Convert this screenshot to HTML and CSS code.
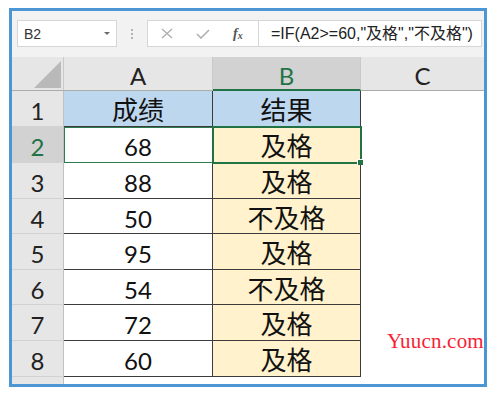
FILE: index.html
```html
<!DOCTYPE html>
<html lang="zh">
<head>
    <meta charset="UTF-8">
    <title>成绩</title>
    <link rel="stylesheet" href="styles.css">
</head>
<body>
    <div class="frame">
        <div class="toolbar">
            <div class="name-box">
                <span>B2</span>
                <span class="caret"></span>
            </div>
            <div class="grip"><i></i><i></i><i></i></div>
            <div class="fx-buttons">
                <svg width="12" height="11" viewBox="0 0 12 11"><path d="M1 1 L11 10 M11 1 L1 10" stroke="#b0b0b0" stroke-width="1.4" fill="none"/></svg>
                <svg width="14" height="10" viewBox="0 0 14 10"><path d="M1 5 L5 9 L13 1" stroke="#b0b0b0" stroke-width="1.6" fill="none"/></svg>
                <span class="fx">f<sub>x</sub></span>
            </div>
            <div class="formula">=IF(A2&gt;=60,"及格","不及格")</div>
        </div>

        <div class="sheet">
            <div class="corner"><span class="tri"></span></div>
            <div class="col-head">A</div>
            <div class="col-head sel">B</div>
            <div class="col-head last">C</div>

            <div class="row-head">1</div>
            <div class="cell head cjk">成绩</div>
            <div class="cell head cjk">结果</div>
            <div class="blank"></div>

            <div class="row-head sel">2</div>
            <div class="cell num ref">68</div>
            <div class="cell res cjk active">及格</div>
            <div class="blank"></div>

            <div class="row-head">3</div>
            <div class="cell num">88</div>
            <div class="cell res cjk">及格</div>
            <div class="blank"></div>

            <div class="row-head">4</div>
            <div class="cell num">50</div>
            <div class="cell res cjk">不及格</div>
            <div class="blank"></div>

            <div class="row-head">5</div>
            <div class="cell num">95</div>
            <div class="cell res cjk">及格</div>
            <div class="blank"></div>

            <div class="row-head">6</div>
            <div class="cell num">54</div>
            <div class="cell res cjk">不及格</div>
            <div class="blank"></div>

            <div class="row-head">7</div>
            <div class="cell num">72</div>
            <div class="cell res cjk">及格</div>
            <div class="blank"></div>

            <div class="row-head">8</div>
            <div class="cell num">60</div>
            <div class="cell res cjk">及格</div>
            <div class="blank"></div>

            <div class="row-head tail"></div>
            <div class="blank"></div>
            <div class="blank"></div>
            <div class="blank"></div>
        </div>

        <div class="mark">Yuucn.com</div>
    </div>
</body>
</html>
```

FILE: styles.css
```css
body {
    margin: 0;
    background: #fff;
    font-family: 'Lato', 'Noto Sans CJK SC', sans-serif;
}

.frame {
    position: relative;
    margin: 8px 0 0 9px;
    width: 472px;
    height: 373px;
    border: 3px solid #4c96d3;
    background: #fff;
    overflow: hidden;
}

/* formula bar */
.toolbar {
    height: 46px;
    box-sizing: border-box;
    padding: 9px 2px 0 5px;
    background: #f2f2f2;
    display: flex;
    align-items: flex-start;
}

.name-box {
    width: 100px;
    height: 27px;
    box-sizing: border-box;
    border: 1px solid #d6d6d6;
    background: #fff;
    display: flex;
    align-items: center;
    justify-content: space-between;
    padding: 0 6px 0 6px;
    font-family: 'Liberation Sans', sans-serif;
    font-size: 14px;
    color: #333;
}

.caret {
    width: 0;
    height: 0;
    border-left: 3px solid transparent;
    border-right: 3px solid transparent;
    border-top: 3px solid #6b6b6b;
}

.grip {
    width: 30px;
    height: 27px;
    display: flex;
    flex-direction: column;
    align-items: center;
    justify-content: center;
    gap: 2px;
}

.grip i {
    width: 2px;
    height: 2px;
    background: #b3b3b3;
}

.fx-buttons {
    width: 111px;
    height: 27px;
    box-sizing: border-box;
    border: 1px solid #d6d6d6;
    border-right: none;
    background: #fff;
    display: flex;
    align-items: center;
    padding-left: 13px;
    gap: 23px;
}

.fx {
    font-family: 'Liberation Serif', serif;
    font-style: italic;
    font-weight: bold;
    font-size: 14px;
    color: #555;
}

.fx sub {
    font-size: 10px;
    vertical-align: -1px;
}

.formula {
    flex: 1;
    height: 27px;
    box-sizing: border-box;
    border: 1px solid #d6d6d6;
    background: #fff;
    padding-left: 12px;
    font-family: 'Liberation Sans', 'Noto Sans CJK SC', sans-serif;
    font-size: 16px;
    line-height: 25px;
    color: #222;
}

/* grid */
.sheet {
    display: grid;
    grid-template-columns: 52px 149px 148px 123px;
    grid-template-rows: 34px 36px 36px 36px 35px 36px 35px 36px 36px 7px;
}

.corner {
    position: relative;
    background: #e6e6e6;
    border-right: 1px solid #c9c9c9;
    border-bottom: 1px solid #ababab;
    box-sizing: border-box;
}

.tri {
    position: absolute;
    right: 2px;
    bottom: 2px;
    width: 0;
    height: 0;
    border-left: 27px solid transparent;
    border-bottom: 27px solid #b9b9b9;
}

.col-head {
    background: #e6e6e6;
    border-right: 1px solid #c9c9c9;
    border-bottom: 1px solid #ababab;
    box-sizing: border-box;
    display: flex;
    align-items: center;
    justify-content: center;
    padding-top: 4px;
    font-size: 24px;
    color: #222;
}

.col-head.sel {
    background: #d2d2d2;
    color: #217346;
    border-bottom: 2px solid #217346;
}

.col-head.last {
    border-right: none;
}

.row-head {
    background: #e6e6e6;
    border-right: 1px solid #c0c0c0;
    border-bottom: 1px solid #d2d2d2;
    box-sizing: border-box;
    display: flex;
    align-items: center;
    justify-content: center;
    padding-top: 4px;
    font-size: 24px;
    color: #222;
}

.row-head.sel {
    background: #d2d2d2;
    color: #217346;
}

.row-head.tail {
    border-bottom: none;
}

.cell {
    box-sizing: border-box;
    border-right: 1px solid #3c3c3c;
    border-bottom: 1px solid #3c3c3c;
    display: flex;
    align-items: center;
    justify-content: center;
    font-size: 24px;
    color: #111;
    padding-top: 4px;
}

.cell.head {
    background: #bdd7ee;
}

.cell.res {
    background: #fff2cc;
}

.cjk {
    font-family: 'Noto Sans CJK SC', sans-serif;
    font-size: 26px;
    padding-top: 0;
}

.cell.ref {
    outline: 1px solid #2f7c50;
    outline-offset: -1px;
}

.cell.active {
    position: relative;
    outline: 2px solid #217346;
    outline-offset: -1px;
}

.cell.active::after {
    content: "";
    position: absolute;
    right: -3px;
    bottom: -3px;
    width: 5px;
    height: 5px;
    background: #217346;
    border: 1px solid #fff;
    border-width: 1px 0 0 1px;
}

.blank {
    background: #fff;
}

.mark {
    position: absolute;
    left: 375px;
    top: 318px;
    font-family: 'Liberation Serif', serif;
    font-size: 21px;
    letter-spacing: 0.2px;
    color: #f81e33;
}
```
